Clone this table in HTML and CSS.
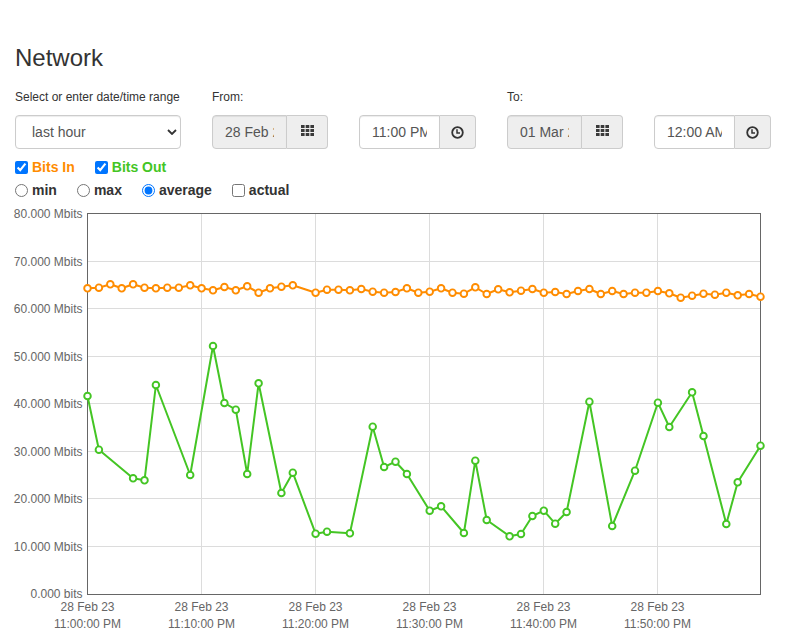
FILE: index.html
```html
<!DOCTYPE html>
<html lang="en">
<head>
<meta charset="utf-8">
<title>Network</title>
<link rel="stylesheet" href="styles.css">
</head>
<body>
<div class="page">
  <h1 class="title">Network</h1>
  <div class="range">
    <div class="label">Select or enter date/time range</div>
    <div class="label">From:</div>
    <div class="label"></div>
    <div class="label">To:</div>
    <div class="label"></div>

    <div class="select-wrap">
      <select class="select"><option>last hour</option></select>
      <svg class="chev" width="10" height="6" viewBox="0 0 10 6"><path d="M1 1 L5 5 L9 1" fill="none" stroke="#333" stroke-width="1.8"/></svg>
    </div>
    <div class="group date">
      <input class="input readonly" type="text" value="28 Feb 2023" readonly>
      <span class="addon"><svg class="ico-grid" width="13" height="11" viewBox="0 0 13 11"><g fill="#3a3a3a"><rect x="0" y="0" width="3.6" height="3"/><rect x="4.7" y="0" width="3.6" height="3"/><rect x="9.4" y="0" width="3.6" height="3"/><rect x="0" y="4" width="3.6" height="3"/><rect x="4.7" y="4" width="3.6" height="3"/><rect x="9.4" y="4" width="3.6" height="3"/><rect x="0" y="8" width="3.6" height="3"/><rect x="4.7" y="8" width="3.6" height="3"/><rect x="9.4" y="8" width="3.6" height="3"/></g></svg></span>
    </div>
    <div class="group time">
      <input class="input" type="text" value="11:00 PM">
      <span class="addon"><svg width="13" height="13" viewBox="0 0 13 13"><circle cx="6.5" cy="6.5" r="5.3" fill="none" stroke="#333" stroke-width="1.8"/><path d="M6 3.3 V7 H9" fill="none" stroke="#333" stroke-width="1.5"/></svg></span>
    </div>
    <div class="group date">
      <input class="input readonly" type="text" value="01 Mar 2023" readonly>
      <span class="addon"><svg class="ico-grid" width="13" height="11" viewBox="0 0 13 11"><g fill="#3a3a3a"><rect x="0" y="0" width="3.6" height="3"/><rect x="4.7" y="0" width="3.6" height="3"/><rect x="9.4" y="0" width="3.6" height="3"/><rect x="0" y="4" width="3.6" height="3"/><rect x="4.7" y="4" width="3.6" height="3"/><rect x="9.4" y="4" width="3.6" height="3"/><rect x="0" y="8" width="3.6" height="3"/><rect x="4.7" y="8" width="3.6" height="3"/><rect x="9.4" y="8" width="3.6" height="3"/></g></svg></span>
    </div>
    <div class="group time">
      <input class="input" type="text" value="12:00 AM">
      <span class="addon"><svg width="13" height="13" viewBox="0 0 13 13"><circle cx="6.5" cy="6.5" r="5.3" fill="none" stroke="#333" stroke-width="1.8"/><path d="M6 3.3 V7 H9" fill="none" stroke="#333" stroke-width="1.5"/></svg></span>
    </div>
  </div>

  <div class="opts series">
    <label class="opt bits-in"><input type="checkbox" checked>Bits In</label>
    <label class="opt bits-out"><input type="checkbox" checked>Bits Out</label>
  </div>
  <div class="opts modes">
    <label class="opt"><input type="radio" name="mode">min</label>
    <label class="opt"><input type="radio" name="mode">max</label>
    <label class="opt"><input type="radio" name="mode" checked>average</label>
    <label class="opt"><input type="checkbox">actual</label>
  </div>
</div>

<svg class="chart" width="787" height="428" viewBox="0 204 787 428">
  <defs>
    <marker id="dot-in" viewBox="0 0 10 10" refX="5" refY="5" markerWidth="10" markerHeight="10" markerUnits="userSpaceOnUse">
      <circle cx="5" cy="5" r="3.3" fill="#fff" stroke="#ff8c00" stroke-width="1.9"/>
    </marker>
    <marker id="dot-out" viewBox="0 0 10 10" refX="5" refY="5" markerWidth="10" markerHeight="10" markerUnits="userSpaceOnUse">
      <circle cx="5" cy="5" r="3.3" fill="#fff" stroke="#44c524" stroke-width="1.9"/>
    </marker>
  </defs>
  <g class="grid">
    <line x1="87.5" x2="760.5" y1="261.5" y2="261.5"/>
    <line x1="87.5" x2="760.5" y1="308.5" y2="308.5"/>
    <line x1="87.5" x2="760.5" y1="356.5" y2="356.5"/>
    <line x1="87.5" x2="760.5" y1="403.5" y2="403.5"/>
    <line x1="87.5" x2="760.5" y1="451.5" y2="451.5"/>
    <line x1="87.5" x2="760.5" y1="498.5" y2="498.5"/>
    <line x1="87.5" x2="760.5" y1="546.5" y2="546.5"/>
    <line x1="201.5" x2="201.5" y1="213.5" y2="594.5"/>
    <line x1="315.5" x2="315.5" y1="213.5" y2="594.5"/>
    <line x1="429.5" x2="429.5" y1="213.5" y2="594.5"/>
    <line x1="543.5" x2="543.5" y1="213.5" y2="594.5"/>
    <line x1="657.5" x2="657.5" y1="213.5" y2="594.5"/>
  </g>
  <rect class="frame" x="87.5" y="213.5" width="673" height="381"/>
  <g class="ylab">
    <text x="82.5" y="217.8">80.000 Mbits</text>
    <text x="82.5" y="265.5">70.000 Mbits</text>
    <text x="82.5" y="313">60.000 Mbits</text>
    <text x="82.5" y="360.5">50.000 Mbits</text>
    <text x="82.5" y="408">40.000 Mbits</text>
    <text x="82.5" y="455.5">30.000 Mbits</text>
    <text x="82.5" y="503">20.000 Mbits</text>
    <text x="82.5" y="550.5">10.000 Mbits</text>
    <text x="82.5" y="598">0.000 bits</text>
  </g>
  <g class="xlab">
    <text x="87.5" y="611">28 Feb 23</text><text x="87.5" y="628">11:00:00 PM</text>
    <text x="201.5" y="611">28 Feb 23</text><text x="201.5" y="628">11:10:00 PM</text>
    <text x="315.5" y="611">28 Feb 23</text><text x="315.5" y="628">11:20:00 PM</text>
    <text x="429.5" y="611">28 Feb 23</text><text x="429.5" y="628">11:30:00 PM</text>
    <text x="543.5" y="611">28 Feb 23</text><text x="543.5" y="628">11:40:00 PM</text>
    <text x="657.5" y="611">28 Feb 23</text><text x="657.5" y="628">11:50:00 PM</text>
  </g>
  <polyline class="series-out" points="87.5,396 98.9,449.7 133.1,478.3 144.5,480.3 155.9,385 190.2,475 213.0,346 224.4,403 235.8,409.7 247.2,474 258.6,383.3 281.4,493 292.8,472.7 315.6,533.7 327.0,531.7 349.9,533.3 372.7,426.7 384.1,467 395.5,461.7 406.9,474 429.7,510.7 441.1,506.3 463.9,533 475.3,460.7 486.7,520 509.6,536.3 521.0,534 532.4,516 543.8,510.7 555.2,523.7 566.6,512 589.4,401.7 612.2,526 635.0,470.7 657.9,402.7 669.3,427 692.1,392.3 703.5,436 726.3,524 737.7,482.3 760.5,445.7"/>
  <polyline class="series-in" points="87.5,288.3 98.9,287.7 110.3,284.3 121.7,288.3 133.1,284.3 144.5,287.7 155.9,288.3 167.3,287.7 178.8,287.7 190.2,285.3 201.6,288.3 213.0,290.3 224.4,287 235.8,290.3 247.2,286.3 258.6,292.7 270.0,288.3 281.4,286.7 292.8,285.3 315.6,292.7 327.0,289.7 338.5,289.7 349.9,290.3 361.3,289 372.7,291.7 384.1,292.7 395.5,292 406.9,288.3 418.3,292.7 429.7,291.7 441.1,288.3 452.5,292.7 463.9,293.7 475.3,287.3 486.7,294 498.2,289.3 509.6,292.3 521.0,290.7 532.4,289 543.8,292.7 555.2,292 566.6,294 578.0,291 589.4,289 600.8,294 612.2,291 623.6,294 635.0,292.7 646.4,292.7 657.9,291 669.3,293.3 680.7,297.7 692.1,295.7 703.5,293.7 714.9,294.7 726.3,292.7 737.7,295.3 749.1,294 760.5,296.7"/>
</svg>
</body>
</html>
```

FILE: styles.css
```css
html, body {
  margin: 0;
  padding: 0;
  background: #fff;
}

body {
  font-family: "Liberation Sans", Arial, sans-serif;
  color: #333;
  overflow: hidden;
}

.page {
  padding: 0 15px;
}

.title {
  margin: 0;
  padding-top: 45px;
  font-size: 24px;
  line-height: 26px;
  font-weight: 400;
  color: #333;
}

.range {
  display: grid;
  grid-template-columns: 197px 147px 148px 147px 1fr;
  grid-template-rows: 16px 34px;
  row-gap: 10px;
  margin-top: 18px;
}

.label {
  font-size: 12px;
  line-height: 16px;
  color: #333;
}

.select-wrap {
  position: relative;
  width: 166px;
  height: 34px;
}

.select {
  appearance: none;
  -webkit-appearance: none;
  display: block;
  width: 100%;
  height: 34px;
  box-sizing: border-box;
  margin: 0;
  border: 1px solid #ccc;
  border-radius: 4px;
  padding: 0 30px 0 16px;
  font-family: "Liberation Sans", Arial, sans-serif;
  font-size: 14px;
  color: #555;
  background: #fff;
  box-shadow: inset 0 1px 1px rgba(0, 0, 0, 0.075);
}

.chev {
  position: absolute;
  right: 4px;
  top: 14px;
  pointer-events: none;
}

.group {
  display: flex;
  height: 34px;
}

.input {
  box-sizing: border-box;
  height: 34px;
  margin: 0;
  border: 1px solid #ccc;
  border-radius: 4px 0 0 4px;
  padding: 0 12px;
  font-family: "Liberation Sans", Arial, sans-serif;
  font-size: 14px;
  color: #555;
  background: #fff;
  box-shadow: inset 0 1px 1px rgba(0, 0, 0, 0.075);
  min-width: 0;
  outline: none;
}

.input.readonly {
  background: #eee;
}

.date .input {
  width: 75px;
}

.time .input {
  width: 81px;
}

.addon {
  box-sizing: border-box;
  height: 34px;
  border: 1px solid #ccc;
  border-left: 0;
  border-radius: 0 4px 4px 0;
  background: #eee;
  display: flex;
  align-items: center;
  justify-content: center;
}

.date .addon {
  width: 41px;
}

.time .addon {
  width: 36px;
}

.ico-grid {
  position: relative;
  top: -2px;
}

.opts {
  display: flex;
  height: 20px;
}

.series {
  margin-top: 8px;
}

.modes {
  margin-top: 3px;
}

.opt {
  display: inline-flex;
  align-items: center;
  margin-right: 20px;
  font-size: 14px;
  font-weight: 700;
  color: #333;
}

.opt input {
  margin: 0 4px 0 0;
  width: 13px;
  height: 13px;
}

.bits-in {
  color: #ff8c00;
}

.bits-out {
  color: #44c524;
}

.chart {
  display: block;
  margin-top: 4px;
  font-family: "Liberation Sans", Arial, sans-serif;
}

.grid line {
  stroke: #dcdcdc;
  stroke-width: 1;
}

.frame {
  fill: none;
  stroke: #666;
  stroke-width: 1;
}

.ylab text {
  font-size: 12px;
  fill: #666;
  text-anchor: end;
}

.xlab text {
  font-size: 12px;
  fill: #666;
  text-anchor: middle;
}

.series-in {
  fill: none;
  stroke: #ff8c00;
  stroke-width: 2;
  stroke-linejoin: round;
  marker-start: url(#dot-in);
  marker-mid: url(#dot-in);
  marker-end: url(#dot-in);
}

.series-out {
  fill: none;
  stroke: #44c524;
  stroke-width: 2;
  stroke-linejoin: round;
  marker-start: url(#dot-out);
  marker-mid: url(#dot-out);
  marker-end: url(#dot-out);
}
```
